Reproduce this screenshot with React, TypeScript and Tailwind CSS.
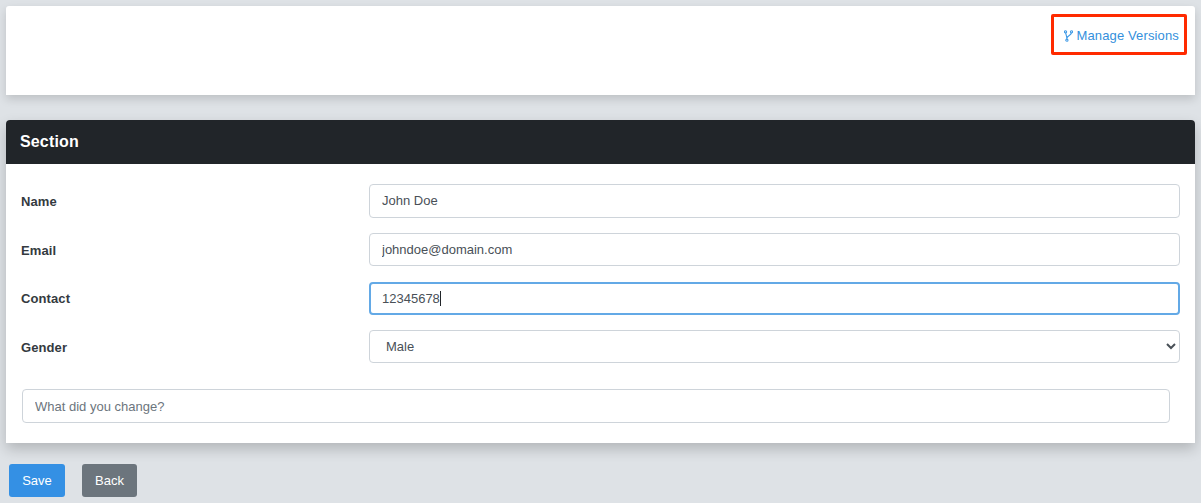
import { useState } from "react";

const font = "font-['Liberation_Sans',Arial,sans-serif]";

const Fork = () => (
  <svg width="9" height="12" viewBox="0 0 9 12" fill="none" stroke="#3f9ae6" strokeWidth="1.1" className="mr-[3px]">
    <circle cx="1.5" cy="1.8" r="1.1" />
    <circle cx="7.5" cy="1.8" r="1.1" />
    <circle cx="2.9" cy="10.2" r="1.1" />
    <path d="M1.7 2.9C2 5 2.9 6.5 2.9 9.1M7.4 2.9C7.2 5.4 3.4 5.6 2.9 8.2" />
  </svg>
);

const Row = ({ label, children, mb, lift }: { label: string; children: React.ReactNode; mb: string; lift?: boolean }) => (
  <div className={`flex items-center ${mb}`}>
    <label className={`w-[349px] pl-[1px] text-[13px] font-bold tracking-[0.1px] text-[#343a40] ${lift ? "" : "pt-[2px]"}`}>
      {label}
    </label>
    <div className="flex-1">{children}</div>
  </div>
);

export default function App() {
  const [name, setName] = useState("John Doe");
  const [email, setEmail] = useState("johndoe@domain.com");
  const [gender, setGender] = useState("Male");

  return (
    <div className={`${font} h-[503px] w-full overflow-hidden bg-[#dee2e6] px-[6px] pt-[6px] text-[13px] text-[#495057]`}>
      <div className="relative mb-[25px] flex h-[89px] justify-end rounded-t-[3px] bg-white pr-[16px] pt-[22px] shadow-[0_4px_10px_rgba(0,0,0,0.15)]">
        <a className="flex h-[15px] items-center text-[13px] leading-[15px] tracking-[0.14px] text-[#3490dc]">
          <Fork />
          Manage Versions
        </a>
        <div className="pointer-events-none absolute left-[1045px] top-[8px] h-[41px] w-[136px] rounded-[2px] border-[3px] border-[#ff2a00]" />
      </div>

      <div className="mb-[21px] h-[323px] rounded-t-[4px] bg-white shadow-[0_6px_14px_rgba(0,0,0,0.2)]">
        <div className="flex h-[44px] items-center rounded-t-[4px] bg-[#212529] px-[14px] text-[16px] font-bold tracking-[0.15px] text-white">
          Section
        </div>
        <div className="pl-[14px] pr-[15px] pt-[20px]">
          <Row label="Name" mb="mb-[15px]">
            <input
              value={name}
              onChange={(e) => setName(e.target.value)}
              className="h-[34px] w-full rounded-[4px] border border-[#ced4da] px-[12px] pb-[1px] text-[13px] text-[#495057] outline-none"
            />
          </Row>
          <Row label="Email" mb="mb-[16px]">
            <input
              value={email}
              onChange={(e) => setEmail(e.target.value)}
              className="h-[33px] w-full rounded-[4px] border border-[#ced4da] px-[12px] text-[13px] text-[#495057] outline-none"
            />
          </Row>
          <Row label="Contact" mb="mb-[15px]" lift>
            <div className="flex h-[33px] w-full items-center rounded-[4px] border-2 border-[#63a9e6] px-[11px] text-[13px] text-[#495057]">
              12345678
              <span className="h-[15px] w-px bg-[#212529]" />
            </div>
          </Row>
          <Row label="Gender" mb="mb-[26px]">
            <select
              value={gender}
              onChange={(e) => setGender(e.target.value)}
              className="h-[33px] w-full rounded-[4px] border border-[#ced4da] bg-white pl-[12px] pr-[6px] text-[13px] text-[#495057] outline-none"
            >
              <option>Male</option>
              <option>Female</option>
            </select>
          </Row>
          <div className="pl-[2px] pr-[10px]">
            <input
              placeholder="What did you change?"
              className="h-[34px] w-full rounded-[4px] border border-[#ced4da] px-[12px] text-[13px] text-[#495057] outline-none placeholder:text-[#6c757d]"
            />
          </div>
        </div>
      </div>

      <div className="flex gap-[17px] pl-[3px]">
        <button className="h-[33px] w-[56px] rounded-[3px] bg-[#3490e4] text-[13px] text-white">Save</button>
        <button className="h-[33px] w-[55px] rounded-[3px] bg-[#6c757d] text-[13px] text-white">Back</button>
      </div>
    </div>
  );
}
